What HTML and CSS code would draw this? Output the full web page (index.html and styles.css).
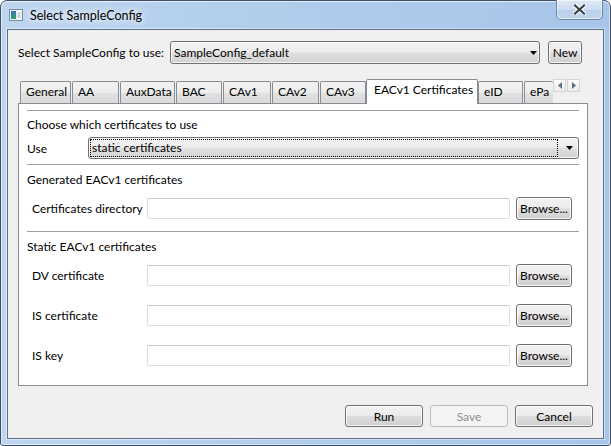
FILE: index.html
```html
<!DOCTYPE html>
<html>
<head>
<meta charset="utf-8">
<title>Select SampleConfig</title>
<link rel="stylesheet" href="styles.css">
</head>
<body>
<div class="window">
  <div class="titlebar">
    <svg class="appicon" width="14" height="12" viewBox="0 0 14 12">
      <defs>
        <linearGradient id="ig" x1="0" y1="0" x2="0" y2="1">
          <stop offset="0" stop-color="#3d6fb7"/>
          <stop offset="1" stop-color="#38a266"/>
        </linearGradient>
      </defs>
      <rect x="0.5" y="0.5" width="13" height="11" fill="#e9eef4" stroke="#7f8fa2"/>
      <rect x="2" y="2" width="5" height="8" fill="url(#ig)"/>
      <rect x="8" y="2" width="4" height="8" fill="#fff"/>
      <line x1="8.5" y1="4" x2="11.5" y2="4" stroke="#9aa6b4"/>
      <line x1="8.5" y1="6" x2="11.5" y2="6" stroke="#9aa6b4"/>
      <line x1="8.5" y1="8" x2="11.5" y2="8" stroke="#9aa6b4"/>
    </svg>
    <span class="title">Select SampleConfig</span>
    <div class="close">
      <svg width="13" height="11" viewBox="0 0 13 11">
        <path d="M2 1.5 L11 9.5 M11 1.5 L2 9.5" stroke="#ffffff" stroke-width="4.2" stroke-linecap="square"/>
        <path d="M2 1.5 L11 9.5 M11 1.5 L2 9.5" stroke="#3a3f46" stroke-width="2.2" stroke-linecap="square"/>
      </svg>
    </div>
  </div>

  <div class="client">
    <div class="toprow">
      <span class="toplabel">Select SampleConfig to use:</span>
      <div class="combo main-combo">
        <span class="combo-text">SampleConfig_default</span>
        <svg class="arrow" width="7" height="4" viewBox="0 0 7 4"><polygon points="0,0 7,0 3.5,4" fill="#000"/></svg>
      </div>
      <button class="btn new-btn">New</button>
    </div>

    <div class="tabwidget">
      <div class="tabbar">
        <div class="tab tab-general">General</div>
        <div class="tab tab-aa">AA</div>
        <div class="tab tab-aux">AuxData</div>
        <div class="tab tab-bac">BAC</div>
        <div class="tab tab-cav1">CAv1</div>
        <div class="tab tab-cav2">CAv2</div>
        <div class="tab tab-cav3">CAv3</div>
        <div class="tab selected">EACv1 Certificates</div>
        <div class="tab tab-eid">eID</div>
        <div class="tab tab-epa">ePa</div>
        <div class="scroller">
          <svg width="4" height="7" viewBox="0 0 4 7"><polygon points="4,0 4,7 0,3.5" fill="#5b6f8a"/></svg>
        </div>
        <div class="scroller">
          <svg width="4" height="7" viewBox="0 0 4 7"><polygon points="0,0 0,7 4,3.5" fill="#5b6f8a"/></svg>
        </div>
      </div>

      <div class="pane">
        <div class="sep"></div>
        <div class="sect sect-first">Choose which certificates to use</div>
        <div class="use-row">
          <span class="use-label">Use</span>
          <div class="combo use-combo">
            <div class="focus">static certificates</div>
            <div class="arrow-box">
              <svg width="7" height="4" viewBox="0 0 7 4"><polygon points="0,0 7,0 3.5,4" fill="#000"/></svg>
            </div>
          </div>
        </div>
        <div class="sep sep-mid"></div>
        <div class="sect">Generated EACv1 certificates</div>
        <div class="field">
          <span class="flabel">Certificates directory</span>
          <div class="input"></div>
          <button class="btn browse">Browse...</button>
        </div>
        <div class="sep sep-low"></div>
        <div class="sect">Static EACv1 certificates</div>
        <div class="field">
          <span class="flabel">DV certificate</span>
          <div class="input"></div>
          <button class="btn browse">Browse...</button>
        </div>
        <div class="field field-spaced">
          <span class="flabel">IS certificate</span>
          <div class="input"></div>
          <button class="btn browse">Browse...</button>
        </div>
        <div class="field field-spaced">
          <span class="flabel">IS key</span>
          <div class="input"></div>
          <button class="btn browse">Browse...</button>
        </div>
      </div>
    </div>

    <div class="buttons">
      <button class="btn dlg-btn">Run</button>
      <button class="btn dlg-btn disabled">Save</button>
      <button class="btn dlg-btn">Cancel</button>
    </div>
  </div>
</div>
</body>
</html>
```

FILE: styles.css
```css
* { box-sizing: border-box; }

html, body {
  margin: 0;
  padding: 0;
}

body {
  width: 611px;
  height: 446px;
  overflow: hidden;
  background: #ffffff;
  font-family: "Lato", "Noto Sans", sans-serif;
  font-size: 12px;
  color: #000;
}

.window {
  position: relative;
  width: 611px;
  height: 446px;
  border: 1px solid #3d4f66;
  border-radius: 7px 7px 3px 3px;
  background: linear-gradient(to right, #bed6f0 0%, #b0cdec 45%, #a6c5e9 100%);
  box-shadow: inset 0 1px 0 rgba(255,255,255,0.7), inset 1px 0 0 rgba(255,255,255,0.5), inset -1px 0 0 rgba(255,255,255,0.5), inset 0 -1px 0 rgba(255,255,255,0.5);
  display: flex;
  flex-direction: column;
  padding: 0 6px 6px;
}

.titlebar {
  height: 28px;
  display: flex;
  align-items: center;
}

.appicon {
  margin-left: 2px;
  flex: none;
}

.title {
  margin-left: 7px;
  margin-top: 1px;
  font-size: 12.5px;
  color: #000;
  text-shadow: 0 0 6px #ffffff, 0 0 10px rgba(255,255,255,0.9);
}

.close {
  position: absolute;
  top: -1px;
  right: 7px;
  width: 47px;
  height: 20px;
  border: 1px solid #6f86a2;
  border-top: none;
  border-radius: 0 0 5px 5px;
  background: linear-gradient(#dfe9f6 0%, #cbdcf0 50%, #b8cfea 51%, #c3d7ef 100%);
  box-shadow: inset 0 0 0 1px rgba(255,255,255,0.55);
  display: flex;
  align-items: center;
  justify-content: center;
}

.client {
  flex: 1;
  background: #f0f0f0;
  border: 1px solid #5c6f86;
  box-shadow: 0 0 0 1px rgba(255,255,255,0.45);
  display: flex;
  flex-direction: column;
  padding: 11px 10px 11px 10px;
}

/* top row */
.toprow {
  display: flex;
  align-items: center;
  height: 23px;
}

.toplabel {
  flex: 0 0 152px;
  min-width: 0;
  white-space: nowrap;
}

.combo {
  height: 23px;
  border: 1px solid #707070;
  border-radius: 3px;
  background: linear-gradient(#f3f3f3 0%, #ececec 48%, #dfdfdf 52%, #d3d3d3 100%);
  box-shadow: inset 0 0 0 1px rgba(255,255,255,0.75);
  display: flex;
  align-items: center;
}

.main-combo {
  flex: 0 0 370px;
  padding-left: 3px;
  padding-right: 2px;
}

.combo-text {
  flex: 1;
  white-space: nowrap;
}

.arrow {
  flex: none;
}

.btn {
  font-family: inherit;
  font-size: inherit;
  color: #000;
  height: 23px;
  padding: 0;
  border: 1px solid #707070;
  border-radius: 3px;
  background: linear-gradient(#f2f2f2 0%, #ebebeb 48%, #dddddd 52%, #cfcfcf 100%);
  box-shadow: inset 0 0 0 1px rgba(255,255,255,0.8);
  flex: none;
}

.new-btn {
  width: 34px;
  margin-left: 8px;
}

/* tabs */
.tabwidget {
  margin-top: 15px;
  width: 570px;
}

.tabbar {
  display: flex;
  align-items: flex-end;
  height: 24px;
  padding-left: 2px;
}

.tab {
  height: 22px;
  border: 1px solid #898c95;
  border-bottom: none;
  border-radius: 2px 2px 0 0;
  background: linear-gradient(#f3f3f3 0%, #ececec 50%, #e1e1e1 51%, #dadada 100%);
  line-height: 20px;
  padding-left: 5px;
  white-space: nowrap;
  overflow: hidden;
  margin-right: 1px;
  flex: none;
}

.tab-general { width: 51px; }
.tab-aa { width: 47px; }
.tab-aux { width: 55px; }
.tab-bac { width: 46px; }
.tab-cav1 { width: 48px; }
.tab-cav2 { width: 47px; }
.tab-cav3 { width: 46px; margin-right: 0; }
.tab-eid { width: 45px; }
.tab-epa { width: 29px; margin-right: 0; border-right: none; }

.tab.selected {
  width: 112px;
  height: 25px;
  background: #ffffff;
  padding-left: 7px;
  margin-bottom: -1px;
  margin-right: 0;
  position: relative;
  z-index: 1;
}

.scroller {
  align-self: flex-start;
  width: 13px;
  height: 13px;
  margin-right: 1px;
  border: 1px solid #d4d4d4;
  background: linear-gradient(#fafafa, #ececec);
  display: flex;
  align-items: center;
  justify-content: center;
  flex: none;
}

.pane {
  height: 283px;
  border: 1px solid #898c95;
  background: #ffffff;
  padding: 6px 8px 0 8px;
  display: flex;
  flex-direction: column;
}

.sep {
  height: 1px;
  background: #a0a0a0;
  flex: none;
}

.sep-mid { margin-top: 5px; }
.sep-low { margin-top: 11px; }

.sect {
  height: 28px;
  display: flex;
  align-items: center;
  flex: none;
}

.sect-first { height: 26px; }

.use-row {
  display: flex;
  align-items: center;
  height: 22px;
  flex: none;
}

.use-label {
  flex: 0 0 61px;
}

.use-combo {
  flex: 1;
  height: 22px;
  padding: 1px;
}

.focus {
  flex: 1;
  height: 18px;
  border: 1px dotted #000;
  line-height: 16px;
  padding-left: 1px;
  white-space: nowrap;
}

.arrow-box {
  flex: 0 0 19px;
  display: flex;
  align-items: center;
  justify-content: center;
  padding-left: 4px;
}

.field {
  display: flex;
  align-items: center;
  height: 23px;
  margin-top: 4px;
  flex: none;
}

.field-spaced { margin-top: 17px; }

.flabel {
  flex: 0 0 120px;
  min-width: 0;
  padding-left: 5px;
  white-space: nowrap;
}

.input {
  flex: 0 0 363px;
  height: 21px;
  background: #ffffff;
  border: 1px solid #dadde3;
  border-top-color: #c5c9cf;
  border-radius: 2px;
}

.browse {
  width: 56px;
  margin-left: 6px;
}

/* bottom buttons */
.buttons {
  margin-top: auto;
  display: flex;
  justify-content: flex-end;
  gap: 7px;
}

.dlg-btn {
  width: 78px;
  height: 22px;
}

.btn.disabled {
  color: #8d8d8d;
  border-color: #b8bcc0;
  background: #f4f4f4;
  box-shadow: none;
}
```
